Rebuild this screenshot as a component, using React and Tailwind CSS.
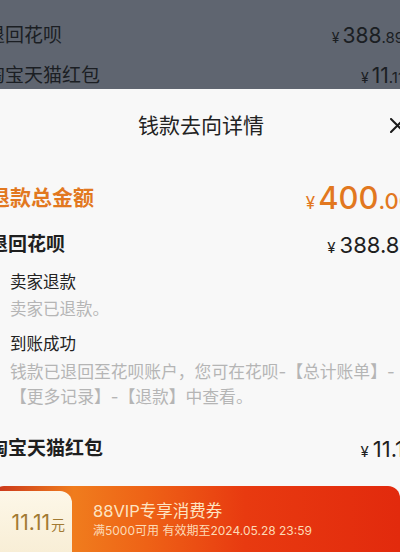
export default function App() {
  return (
    <div className="w-[400px] h-[552px] overflow-hidden bg-[#f8f8f8] font-['Inter','Noto_Sans_CJK_SC',sans-serif] flex flex-col">
      {/* dimmed page behind */}
      <div className="h-[89px] shrink-0 bg-[#5f6570] overflow-hidden">
        <div className="-ml-[20px] w-[440px] pl-[6px] pr-[16px] pt-[22px] flex flex-col gap-[12px] text-[#1b1e23]">
          <div className="h-[28px] flex items-center justify-between">
            <span className="text-[19px] leading-[28px]">退回花呗</span>
            <span className="flex items-baseline">
              <span className="text-[14px] mr-[3px]">¥</span>
              <span className="text-[21px]">388</span>
              <span className="text-[15px]">.89</span>
            </span>
          </div>
          <div className="h-[28px] flex items-center justify-between">
            <span className="text-[19px] leading-[28px]">淘宝天猫红包</span>
            <span className="flex items-baseline">
              <span className="text-[14px] mr-[3px]">¥</span>
              <span className="text-[21px]">11</span>
              <span className="text-[15px]">.11</span>
            </span>
          </div>
        </div>
      </div>

      {/* sheet */}
      <div className="flex-1 overflow-hidden">
        <div className="-ml-[20px] w-[440px] pl-[9px] pr-[7px] flex flex-col">
          <div className="relative h-[74px] flex items-center justify-center">
            <span className="text-[21px] text-[#222] leading-[28px]">钱款去向详情</span>
            <svg className="absolute right-[8px] top-[29px]" width="15" height="15" viewBox="0 0 15 15">
              <path d="M1 1 L14 14 M14 1 L1 14" stroke="#1a1a1a" strokeWidth="2" strokeLinecap="round" />
            </svg>
          </div>

          <div className="mt-[15px] h-[40px] flex items-center justify-between text-[#e2781f]">
            <span className="text-[21px] font-semibold leading-[28px]">退款总金额</span>
            <span className="flex items-baseline">
              <span className="text-[17px] mr-[3px]">¥</span>
              <span className="text-[31px] font-medium">400</span>
              <span className="text-[22px] font-medium">.00</span>
            </span>
          </div>

          <div className="mt-[13px] h-[28px] flex items-center justify-between text-[#1f1f1f]">
            <span className="text-[19px] font-semibold leading-[28px]">退回花呗</span>
            <span className="flex items-baseline">
              <span className="text-[15px] mr-[4px]">¥</span>
              <span className="text-[22px]">388.89</span>
            </span>
          </div>

          <div className="mt-[10px] flex">
            <div className="w-[21px] shrink-0 pt-[9px]">
              <div className="ml-[3px] w-[8px] h-[8px] rounded-full bg-[#f8dcae]"></div>
            </div>
            <div className="flex flex-col">
              <span className="text-[16.5px] leading-[26px] text-[#222]">卖家退款</span>
              <span className="mt-[1px] text-[16.5px] leading-[26px] text-[#b5b5b5]">卖家已退款。</span>
            </div>
          </div>

          <div className="mt-[9px] flex">
            <div className="w-[21px] shrink-0 pt-[9px]">
              <div className="ml-[3px] w-[8px] h-[8px] rounded-full bg-[#f8dcae]"></div>
            </div>
            <div className="flex flex-col w-[400px]">
              <span className="text-[16.5px] leading-[26px] text-[#222]">到账成功</span>
              <p className="mt-[3px] text-[16.8px] leading-[25px] text-[#b5b5b5]">
                钱款已退回至花呗账户，您可在花呗-【总计账单】-【更多记录】-【退款】中查看。
              </p>
            </div>
          </div>

          <div className="mt-[25px] h-[28px] flex items-center justify-between text-[#1f1f1f]">
            <span className="text-[19px] font-semibold leading-[28px]">淘宝天猫红包</span>
            <span className="flex items-baseline">
              <span className="text-[15px] mr-[4px]">¥</span>
              <span className="text-[22px]">11.11</span>
            </span>
          </div>

          <div className="mt-[23px] ml-[3px] w-[408px] h-[80px] rounded-[12px] overflow-hidden bg-[linear-gradient(90deg,#c8331b_0%,#e0601c_12%,#f07c1d_20%,#ee6216_38%,#e83a10_62%,#e22a0d_100%)] flex">
            <div className="mt-[5px] w-[80px] shrink-0 rounded-tl-[6px] rounded-tr-[12px] bg-[linear-gradient(180deg,#fdf7e8,#f7ecd2)] flex items-center justify-end pr-[7px] pb-[12px]">
              <span className="flex items-baseline text-[#a27a33]">
                <span className="text-[21px]">11.11</span>
                <span className="text-[14px] ml-[1px]">元</span>
              </span>
            </div>
            <div className="pl-[21px] pt-[14px] flex flex-col">
              <span className="text-[16.5px] leading-[22px] text-[#fde4c2]">88VIP专享消费券</span>
              <span className="text-[12px] leading-[18px] text-[#fcdab6]">满5000可用 有效期至2024.05.28 23:59</span>
            </div>
          </div>
        </div>
      </div>
    </div>
  );
}
